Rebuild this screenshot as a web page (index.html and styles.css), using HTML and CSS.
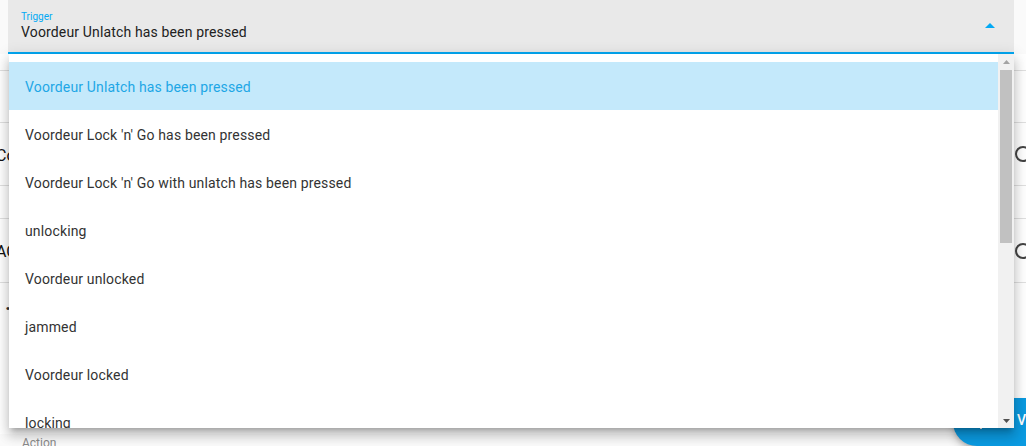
FILE: index.html
```html
<!DOCTYPE html>
<html>
<head>
<meta charset="utf-8">
<link rel="stylesheet" href="styles.css">
</head>
<body>
<div class="page">
  <div class="field">
    <div class="field-text">
      <span class="field-label">Trigger</span>
      <span class="field-value">Voordeur Unlatch has been pressed</span>
    </div>
    <svg class="field-arrow" width="10" height="5" viewBox="0 0 10 5"><polygon points="0,5 5,0 10,5" fill="#03a9f4"/></svg>
  </div>

  <div class="bg-rows">
    <div class="bg-row h16"></div>
    <div class="bg-row h51"></div>
    <div class="bg-row h62"><span class="bg-text">Co</span><span class="bg-icon"></span></div>
    <div class="bg-row h32"></div>
    <div class="bg-row h63"><span class="bg-text">AC</span><span class="bg-icon"></span></div>
    <div class="bg-row h56"><span class="bg-dot">·</span></div>
    <div class="bg-spacer"></div>
    <div class="action-label">Action</div>
  </div>

  <div class="fab">
    <svg width="24" height="24" viewBox="0 0 24 24"><path d="M19 13h-6v6h-2v-6H5v-2h6V5h2v6h6v2z" fill="#fff"/></svg>
    <span class="fab-text">VOEG ACTIE TOE</span>
  </div>

  <div class="menu">
    <ul class="menu-list">
      <li class="menu-item selected">Voordeur Unlatch has been pressed</li>
      <li class="menu-item">Voordeur Lock 'n' Go has been pressed</li>
      <li class="menu-item">Voordeur Lock 'n' Go with unlatch has been pressed</li>
      <li class="menu-item">unlocking</li>
      <li class="menu-item">Voordeur unlocked</li>
      <li class="menu-item">jammed</li>
      <li class="menu-item">Voordeur locked</li>
      <li class="menu-item">locking</li>
    </ul>
    <div class="scrollbar">
      <div class="sb-btn"><svg width="7" height="4" viewBox="0 0 7 4"><polygon points="0,4 3.5,0 7,4" fill="#a3a3a3"/></svg></div>
      <div class="sb-track"><div class="sb-thumb"></div></div>
      <div class="sb-btn"><svg width="7" height="4" viewBox="0 0 7 4"><polygon points="0,0 3.5,4 7,0" fill="#505050"/></svg></div>
    </div>
  </div>
</div>
</body>
</html>
```

FILE: styles.css
```css
* { box-sizing: border-box; }
html, body { margin: 0; padding: 0; }
body {
  background: #ffffff;
  font-family: Roboto, "Liberation Sans", sans-serif;
  color: #212121;
}
.page {
  position: relative;
  width: 1026px;
  height: 446px;
  overflow: hidden;
  background: #fafafa;
}
.field {
  margin-left: 8px;
  width: 1006px;
  height: 54px;
  background: #e9e9e9;
  border-bottom: 2px solid #03a9f4;
  display: flex;
  align-items: flex-start;
  padding: 11px 19px 0 13px;
}
.field-text {
  flex: 1;
  display: flex;
  flex-direction: column;
}
.field-label {
  font-size: 10px;
  color: #03a9f4;
  line-height: 12px;
}
.field-value {
  font-size: 14px;
  color: #212121;
  line-height: 20px;
  margin-top: -1px;
  letter-spacing: 0.15px;
}
.field-arrow { display: block; margin-top: 12px; }

.bg-rows {
  display: flex;
  flex-direction: column;
  width: 1026px;
}
.bg-row {
  border-bottom: 1px solid #e0e0e0;
  display: flex;
  align-items: center;
  justify-content: space-between;
  background: #ffffff;
}
.h16 { height: 17px; }
.h51 { height: 52px; }
.h62 { height: 63px; }
.h32 { height: 33px; }
.h63 { height: 64px; }
.h56 { height: 56px; border-bottom: none; }
.bg-spacer { height: 95px; background: #ffffff; }
.bg-text {
  font-size: 16px;
  color: #111;
  margin-left: -4px;
  margin-top: 2px;
}
.bg-icon {
  width: 16px;
  height: 16px;
  border: 2px solid #444;
  border-radius: 50%;
  margin-right: -5px;
}
.bg-dot {
  font-size: 20px;
  font-weight: bold;
  margin-left: 5px;
  margin-top: -6px;
  color: #333;
}
.action-label {
  font-size: 12px;
  color: #8a8a8a;
  margin-left: 22px;
  margin-top: 2px;
}

.fab {
  position: absolute;
  left: 953px;
  top: 398px;
  width: 220px;
  height: 48px;
  border-radius: 24px;
  background: #0b9ae0;
  display: flex;
  align-items: center;
  padding-left: 16px;
  gap: 24px;
  box-shadow: 0 3px 5px -1px rgba(0,0,0,.2), 0 6px 10px 0 rgba(0,0,0,.14);
}
.fab-text {
  color: #fff;
  font-size: 14px;
  font-weight: 500;
  margin-top: -4px;
}

.menu {
  position: absolute;
  left: 9px;
  top: 54px;
  width: 1005px;
  height: 374px;
  background: #ffffff;
  display: flex;
  box-shadow: 0 5px 5px -3px rgba(0,0,0,.2), 0 8px 10px 1px rgba(0,0,0,.14), 0 3px 14px 2px rgba(0,0,0,.12);
  overflow: hidden;
}
.menu-list {
  list-style: none;
  margin: 0;
  padding: 8px 0 0 0;
  flex: 1;
  overflow: hidden;
}
.menu-item {
  height: 48px;
  display: flex;
  align-items: center;
  padding: 2px 0 0 16px;
  font-size: 14px;
  color: #333333;
  letter-spacing: 0.15px;
}
.menu-item.selected {
  background: #c4e9fb;
  color: #1ea7e6;
}
.scrollbar {
  width: 16px;
  background: #f1f1f1;
  display: flex;
  flex-direction: column;
}
.sb-btn {
  height: 15px;
  display: flex;
  align-items: center;
  justify-content: center;
}
.sb-track { flex: 1; padding: 1px 2px 0 2px; }
.sb-thumb {
  height: 173px;
  background: #c1c1c1;
}
```
